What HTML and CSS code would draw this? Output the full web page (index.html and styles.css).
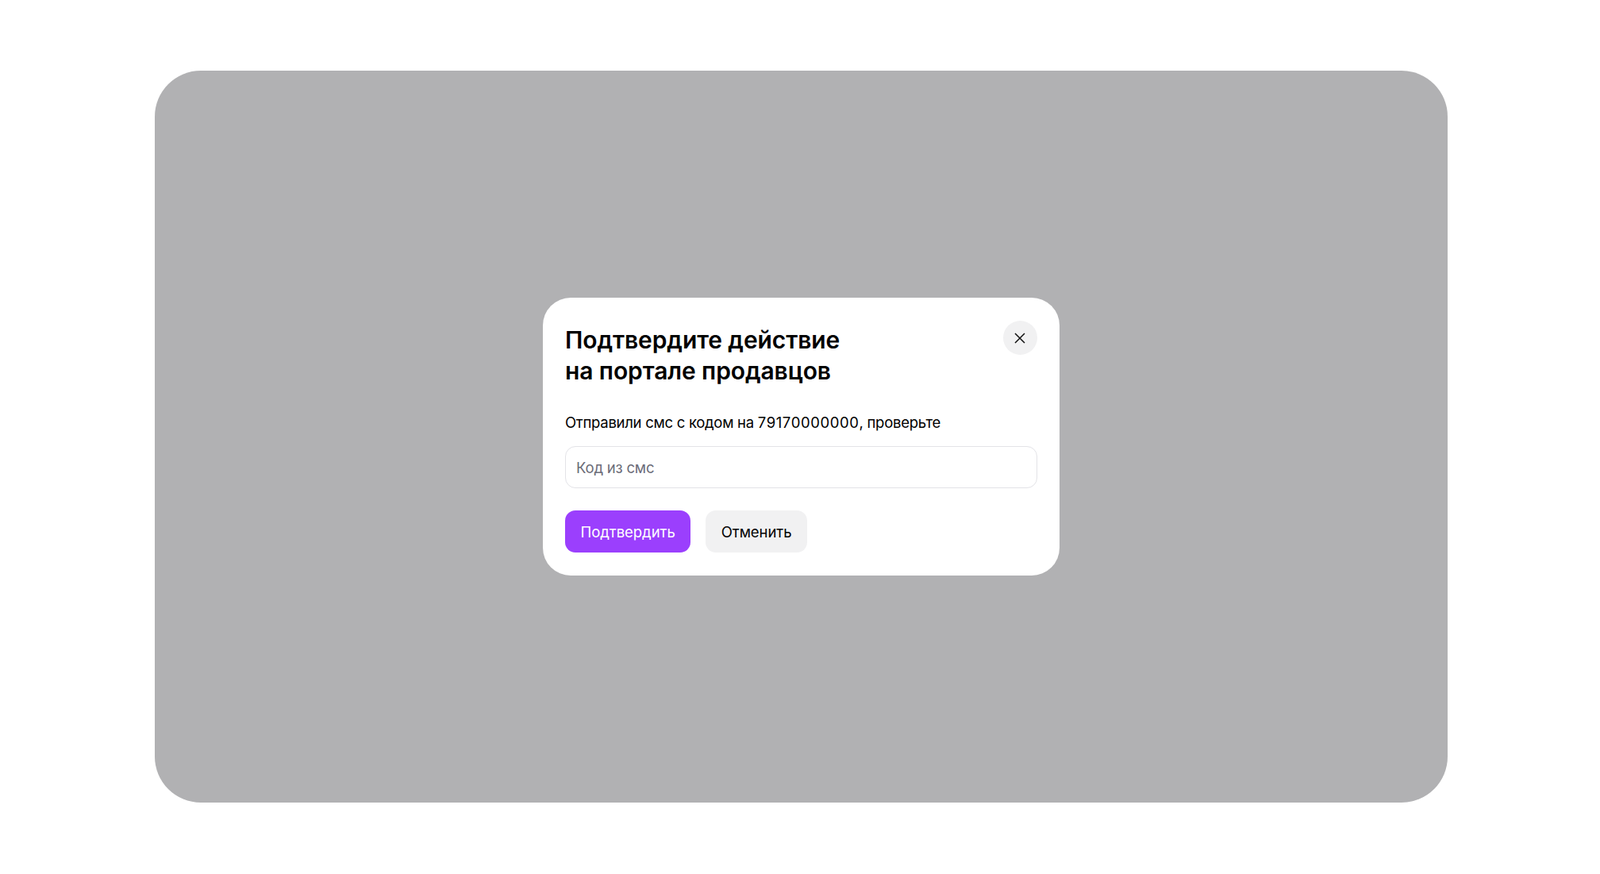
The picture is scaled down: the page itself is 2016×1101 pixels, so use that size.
FILE: index.html
```html
<!DOCTYPE html>
<html lang="ru">
<head>
    <meta charset="UTF-8">
    <title>Подтвердите действие</title>
    <link rel="stylesheet" href="styles.css">
</head>
<body>
    <div class="overlay">
        <form class="modal">
            <div class="modal-head">
                <h1>Подтвердите действие<br>на портале продавцов</h1>
                <button type="button" class="close-button" aria-label="Закрыть">
                    <svg width="14" height="14" viewBox="0 0 14 14" fill="none" stroke="#111" stroke-width="1.5">
                        <path d="M1 1l12 12M13 1L1 13"/>
                    </svg>
                </button>
            </div>
            <p class="modal-text">Отправили смс с кодом на <span class="phone">79170000000</span>, проверьте</p>
            <input type="text" class="code-input" placeholder="Код из смс">
            <div class="modal-actions">
                <button type="submit" class="btn btn-primary">Подтвердить</button>
                <button type="button" class="btn btn-secondary">Отменить</button>
            </div>
        </form>
    </div>
</body>
</html>
```

FILE: styles.css
```css
:root {
    --overlay-color: #b1b1b3;
    --accent-color: #9b3ffd;
    --soft-color: #f1f1f2;
    --border-color: #e3e3e7;
}

body {
    margin: 0;
    height: 1101px;
    box-sizing: border-box;
    padding: 88.5px 192px 90px 195px;
    background: #fff;
    font-family: Inter, 'Noto Sans', sans-serif;
    color: #000;
    overflow: hidden;
}

.overlay {
    height: 100%;
    box-sizing: border-box;
    background: var(--overlay-color);
    border-radius: 58px;
    display: flex;
    justify-content: center;
    align-items: center;
}

.modal {
    width: 651px;
    box-sizing: border-box;
    padding: 29px 28.5px 29px 28px;
    background: #fff;
    border-radius: 35px;
}

.modal-head {
    display: flex;
    justify-content: space-between;
    align-items: flex-start;
}

h1 {
    margin: 4.5px 0 0;
    font-size: 30px;
    line-height: 39px;
    font-weight: 600;
    letter-spacing: -0.1px;
}

.close-button {
    width: 43px;
    height: 43px;
    padding: 0;
    border: none;
    border-radius: 50%;
    background: var(--soft-color);
    display: flex;
    justify-content: center;
    align-items: center;
}

.modal-text {
    margin: 32px 0 0;
    font-size: 18.5px;
    line-height: 26px;
    letter-spacing: -0.28px;
}

.phone {
    letter-spacing: 0.6px;
}

.code-input {
    display: block;
    width: 100%;
    height: 53px;
    box-sizing: border-box;
    margin-top: 17px;
    padding: 1px 13px 0;
    border: 1.5px solid var(--border-color);
    border-radius: 13px;
    font-family: inherit;
    font-size: 18.5px;
    letter-spacing: -0.2px;
    outline: none;
}

.code-input::placeholder {
    color: #6c6c78;
}

.modal-actions {
    display: flex;
    gap: 19px;
    margin-top: 28px;
}

.btn {
    height: 53px;
    padding: 1px 19.5px 0;
    border: none;
    border-radius: 13px;
    font-family: inherit;
    font-size: 18.5px;
    letter-spacing: -0.05px;
}

.btn-primary {
    background: var(--accent-color);
    color: #fff;
}

.btn-secondary {
    background: var(--soft-color);
    color: #000;
}
```
